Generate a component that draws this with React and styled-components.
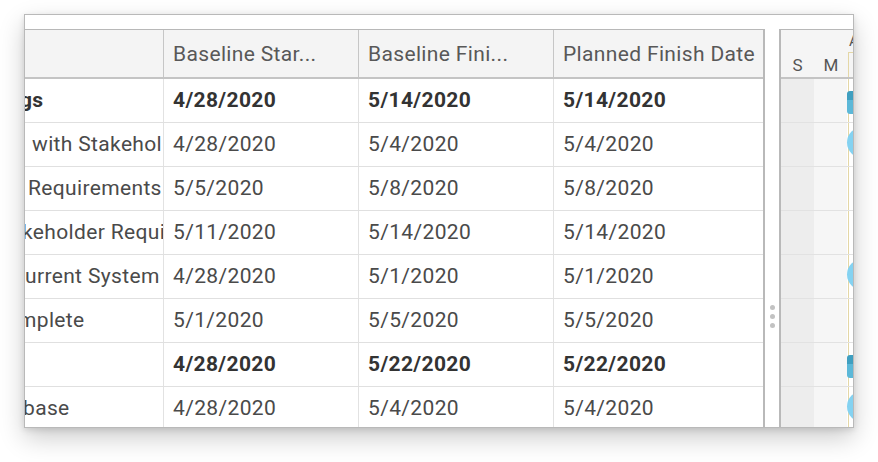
import React from "react";
import styled, { createGlobalStyle } from "styled-components";

const Global = createGlobalStyle`
  html, body { margin: 0; padding: 0; background: #ffffff; }
  body { font-family: Roboto, "Noto Sans", "Liberation Sans", sans-serif; }
`;

const COLS = "139px 195px 195px 1fr";

const Page = styled.div`
  width: 878px;
  height: 462px;
  box-sizing: border-box;
  padding: 14px 0 0 24px;
  overflow: hidden;
`;

const Card = styled.div`
  width: 830px;
  height: 414px;
  box-sizing: border-box;
  border: 1px solid #b9b9b9;
  background: #fff;
  box-shadow: 0 10px 24px rgba(0, 0, 0, 0.2), 0 2px 6px rgba(0, 0, 0, 0.12);
  padding-top: 14px;
  display: flex;
  overflow: hidden;
`;

const GridPanel = styled.div`
  width: 740px;
  flex: none;
  box-sizing: border-box;
  border-top: 1px solid #b8b8b8;
  border-right: 2px solid #b9b9b9;
  display: flex;
  flex-direction: column;
  overflow: hidden;
`;

const HeaderRow = styled.div`
  display: grid;
  grid-template-columns: ${COLS};
  height: 49px;
  flex: none;
  box-sizing: border-box;
  border-bottom: 2px solid #c4c4c4;
  background: #f4f4f4;
`;

const HeaderCell = styled.div`
  display: flex;
  align-items: center;
  padding-left: 9px;
  box-sizing: border-box;
  border-right: ${(p) => (p.$last ? "none" : "1px solid #c6c6c6")};
  font-size: 21px;
  letter-spacing: 0.35px;
  color: #585858;
  white-space: nowrap;
  overflow: hidden;
`;

const Row = styled.div`
  display: grid;
  grid-template-columns: ${COLS};
  height: 44px;
  flex: none;
  box-sizing: border-box;
  border-bottom: 1px solid #e0e0e0;
  font-weight: ${(p) => (p.$bold ? 700 : 400)};
  color: ${(p) => (p.$bold ? "#333" : "#4a4a4a")};
`;

const Cell = styled.div`
  display: flex;
  align-items: center;
  padding-left: 9px;
  padding-bottom: 1px;
  box-sizing: border-box;
  border-right: ${(p) => (p.$last ? "none" : "1px solid #e2e2e2")};
  font-size: 21px;
  letter-spacing: 0.35px;
  white-space: nowrap;
  overflow: hidden;
`;

const NameCell = styled(Cell)`
  padding-left: 0;
`;

const NameText = styled.span`
  margin-left: ${(p) => p.$offset}px;
  flex: none;
`;

const Splitter = styled.div`
  width: 14px;
  flex: none;
  display: flex;
  flex-direction: column;
  align-items: center;
  gap: 4px;
  padding-top: 276px;
  box-sizing: border-box;
`;

const Dot = styled.span`
  width: 5px;
  height: 5px;
  border-radius: 50%;
  background: #c2c2c2;
`;

const GanttPanel = styled.div`
  flex: 1;
  min-width: 0;
  box-sizing: border-box;
  border-top: 1px solid #b8b8b8;
  border-left: 2px solid #b9b9b9;
  display: flex;
  flex-direction: column;
  overflow: hidden;
`;

const GanttHeader = styled.div`
  height: 49px;
  flex: none;
  box-sizing: border-box;
  border-bottom: 2px solid #c4c4c4;
  background: #f5f5f5;
  display: flex;
  flex-direction: column;
`;

const TopTier = styled.div`
  height: 22px;
  display: flex;
  align-items: center;
  padding-left: 68px;
  font-size: 15px;
  color: #555;
  white-space: nowrap;
`;

const DayTier = styled.div`
  flex: 1;
  display: flex;
`;

const Day = styled.div`
  width: ${(p) => p.$w}px;
  flex: none;
  display: flex;
  align-items: center;
  justify-content: center;
  font-size: 17px;
  color: #555;
  box-sizing: border-box;
  border-left: ${(p) => (p.$today ? "1px solid #e4d7a6" : "none")};
  border-top: ${(p) => (p.$today ? "1px solid #e4d7a6" : "none")};
`;

const GanttBody = styled.div`
  flex: 1;
  display: flex;
  flex-direction: column;
  background: linear-gradient(
    to right,
    #ededed 0 33px,
    #f6f6f6 33px 66px,
    #ffffff 66px 67px,
    #e4d7a6 67px 68px,
    #ffffff 68px
  );
`;

const GanttRow = styled.div`
  height: 44px;
  flex: none;
  box-sizing: border-box;
  border-bottom: 1px solid #e2e2e2;
  position: relative;
`;

const Bar = styled.div`
  position: absolute;
  left: 66px;
  width: 60px;
  top: ${(p) => (p.$summary ? 12 : 4)}px;
  height: ${(p) => (p.$summary ? 23 : 31)}px;
  border-radius: ${(p) => (p.$summary ? "3px" : "16px")};
  background: ${(p) =>
    p.$summary
      ? "linear-gradient(to bottom, #3f9fc0 0 40%, #5cb8d8 40%)"
      : "#84d2f1"};
`;

const rows = [
  { bold: true, name: "gs", off: -5, s: "4/28/2020", f: "5/14/2020", p: "5/14/2020", bar: "summary" },
  { name: "with Stakehol", off: 7, s: "4/28/2020", f: "5/4/2020", p: "5/4/2020", bar: "task" },
  { name: "Requirements", off: 3, s: "5/5/2020", f: "5/8/2020", p: "5/8/2020" },
  { name: "keholder Requi", off: -3, s: "5/11/2020", f: "5/14/2020", p: "5/14/2020" },
  { name: "urrent System", off: 0, s: "4/28/2020", f: "5/1/2020", p: "5/1/2020", bar: "task" },
  { name: "mplete", off: -7, s: "5/1/2020", f: "5/5/2020", p: "5/5/2020" },
  { bold: true, name: "", off: 0, s: "4/28/2020", f: "5/22/2020", p: "5/22/2020", bar: "summary" },
  { name: "base", off: -2, s: "4/28/2020", f: "5/4/2020", p: "5/4/2020", bar: "task" },
];

export default function App() {
  return (
    <>
      <Global />
      <Page>
        <Card>
          <GridPanel>
            <HeaderRow>
              <HeaderCell />
              <HeaderCell>Baseline Star...</HeaderCell>
              <HeaderCell>Baseline Fini...</HeaderCell>
              <HeaderCell $last>Planned Finish Date</HeaderCell>
            </HeaderRow>
            {rows.map((r, i) => (
              <Row key={i} $bold={r.bold}>
                <NameCell>
                  <NameText $offset={r.off}>{r.name}</NameText>
                </NameCell>
                <Cell>{r.s}</Cell>
                <Cell>{r.f}</Cell>
                <Cell $last>{r.p}</Cell>
              </Row>
            ))}
          </GridPanel>
          <Splitter>
            <Dot />
            <Dot />
            <Dot />
          </Splitter>
          <GanttPanel>
            <GanttHeader>
              <TopTier>April 2020</TopTier>
              <DayTier>
                <Day $w={33}>S</Day>
                <Day $w={34}>M</Day>
                <Day $w={34} $today />
              </DayTier>
            </GanttHeader>
            <GanttBody>
              {rows.map((r, i) => (
                <GanttRow key={i}>
                  {r.bar && <Bar $summary={r.bar === "summary"} />}
                </GanttRow>
              ))}
            </GanttBody>
          </GanttPanel>
        </Card>
      </Page>
    </>
  );
}
